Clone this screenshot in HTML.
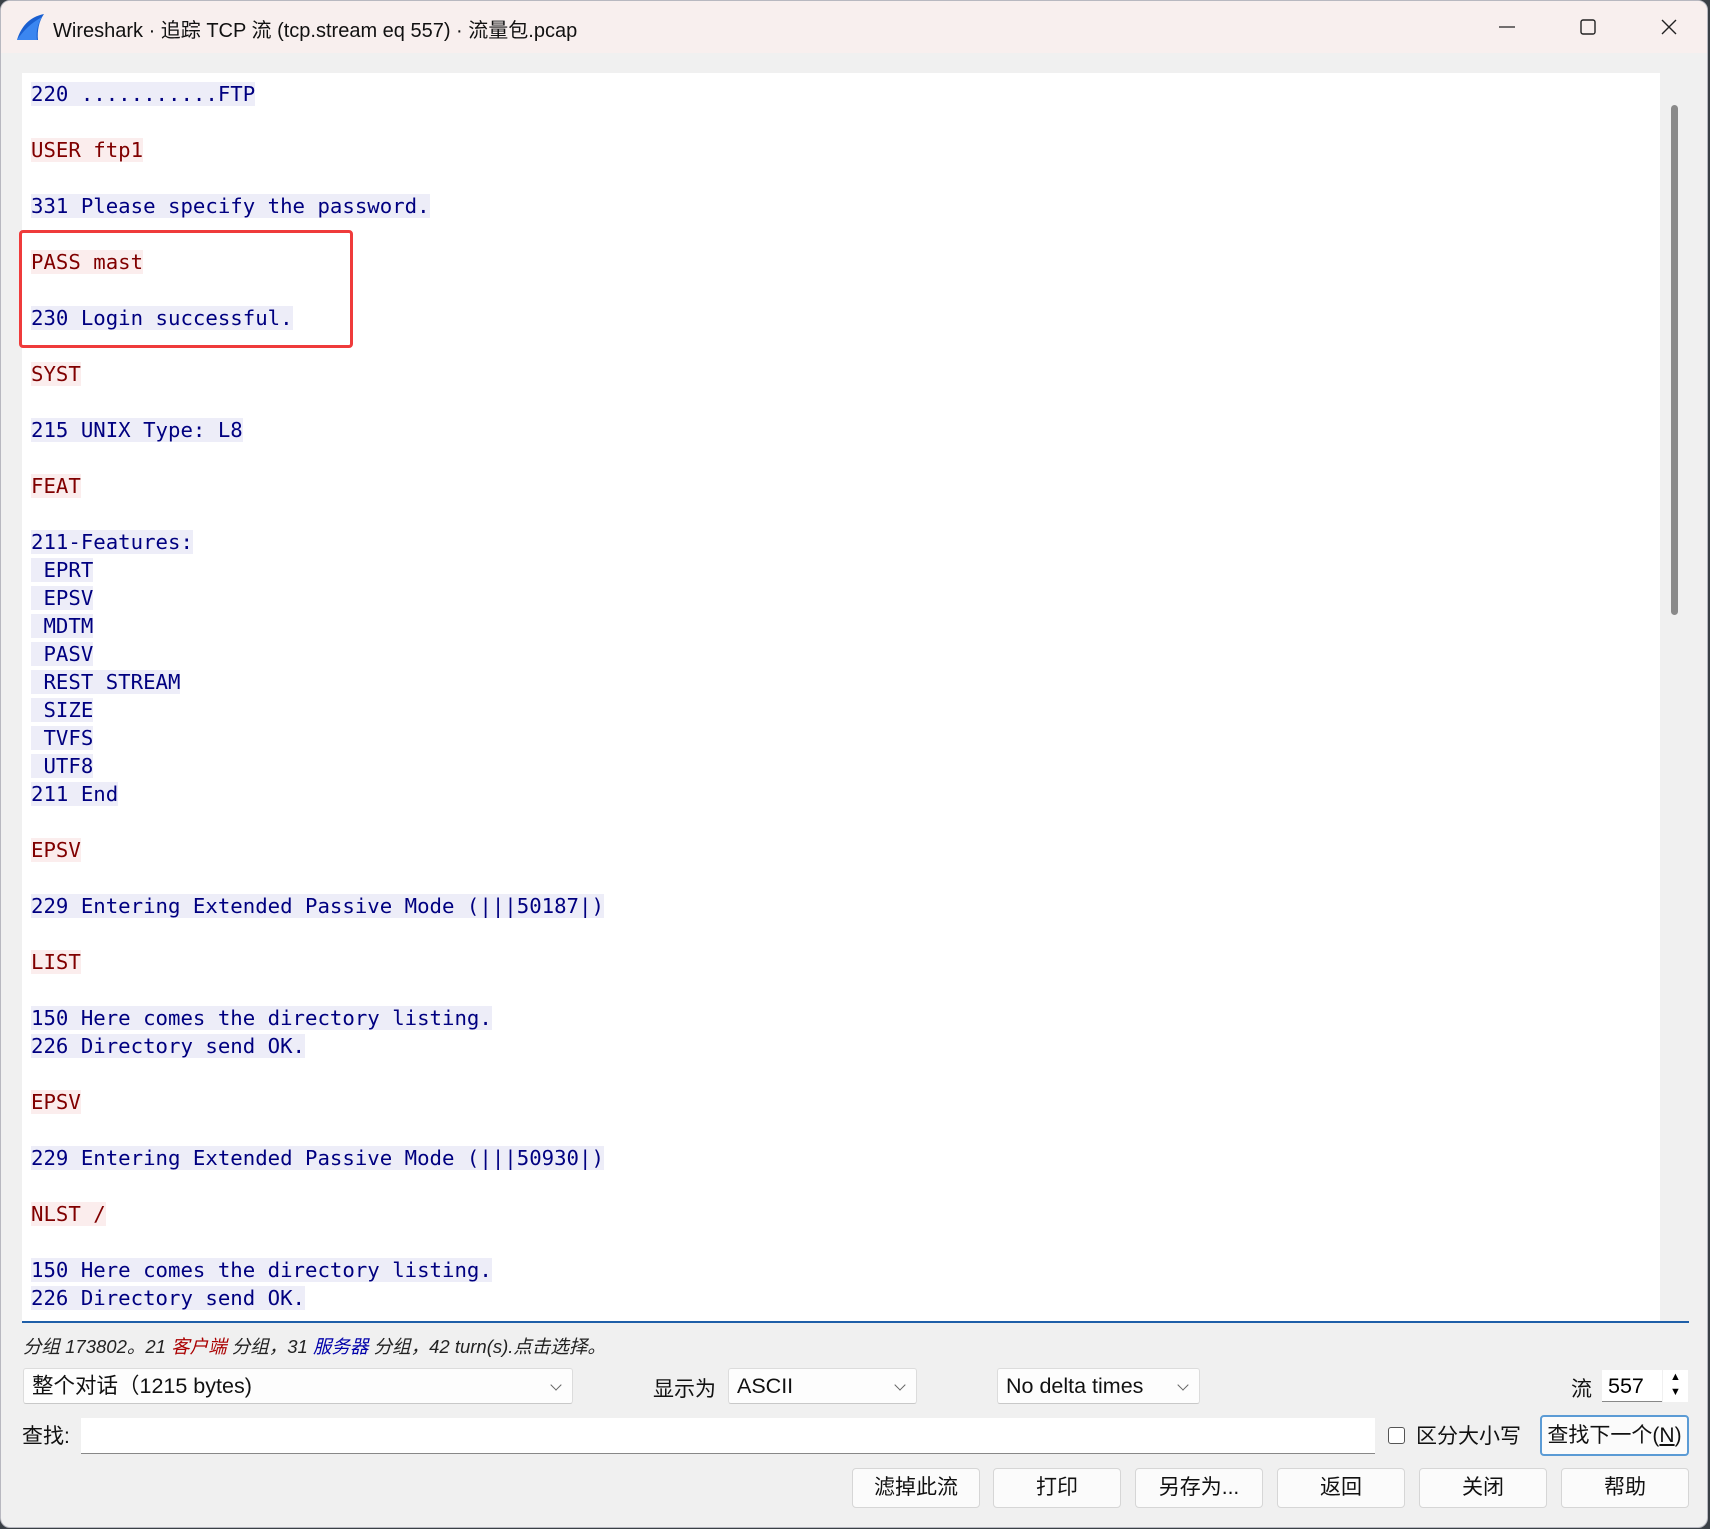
<!DOCTYPE html>
<html><head><meta charset="utf-8"><style>
*{box-sizing:border-box;margin:0;padding:0}
body{width:1710px;height:1529px;background:#3a4046;position:relative;overflow:hidden;font-family:"Liberation Sans","Noto Sans CJK SC",sans-serif;}
.win{position:absolute;left:0;top:0;width:1708px;height:1528px;background:#f0f0f0;border:1px solid #b8b8c0;border-radius:10px;overflow:hidden}
.title{position:absolute;left:0;top:0;right:0;height:52px;background:#f8efee}
.title .t{position:absolute;left:52px;top:13px;font-size:20px;color:#111;white-space:nowrap}
.ctl{position:absolute;top:16px;width:20px;height:20px}
.text{position:absolute;left:21px;top:72px;width:1667px;height:1250px;background:#fff;border-bottom:2px solid #1f5fa8;overflow:hidden}
.sb{position:absolute;right:0;top:0;width:29px;height:100%;background:#f0f0f0}
.thumb{position:absolute;left:11px;top:32px;width:7px;height:510px;background:#8a8a8a;border-radius:4px}
.lines{position:absolute;left:9px;top:7px;font-family:"DejaVu Sans Mono","Liberation Mono",monospace;font-size:20.7px;line-height:28px}
.l{height:28px;white-space:pre}
.b span{background:#ededf8;color:#000080}
.r span{background:#fbeded;color:#800000}
.box{position:absolute;left:18px;top:229px;width:334px;height:118px;border:3px solid #ef3b3b;border-radius:4px}
.ui{position:absolute;font-size:21px;color:#111;white-space:nowrap}
.combo{position:absolute;background:#fdfdfd;border:1px solid #dcdcdc;border-bottom-color:#c8c8c8;border-radius:3px;font-size:21.5px;padding-left:8px;line-height:34px;color:#111}
.combo:after{content:"";position:absolute;right:12px;top:12px;width:7px;height:7px;border-right:1px solid #666;border-bottom:1px solid #666;transform:rotate(45deg)}
.btn{position:absolute;top:1467px;width:128px;height:40px;background:#fbfbfb;border:1px solid #d6d6d6;border-radius:4px;font-size:21px;text-align:center;line-height:38px;color:#111}
</style></head><body>
<div class="win">
<div class="title">
<svg style="position:absolute;left:14px;top:12px" width="30" height="28" viewBox="0 0 30 28"><path d="M2 27 C6 14 14 4 29 1 C24 8 22 18 23 27 Z" fill="#1a5fd0"/><path d="M2 27 C8 18 16 10 27 4 C22 12 21 20 22 27Z" fill="#3b86f0"/></svg>
<div class="t">Wireshark · 追踪 TCP 流 (tcp.stream eq 557) · 流量包.pcap</div>
<svg class="ctl" style="left:1496px" viewBox="0 0 20 20"><path d="M2 10H18" stroke="#222" stroke-width="1.3"/></svg>
<svg class="ctl" style="left:1577px" viewBox="0 0 20 20"><rect x="3" y="3" width="14" height="14" rx="2" fill="none" stroke="#222" stroke-width="1.4"/></svg>
<svg class="ctl" style="left:1658px" viewBox="0 0 20 20"><path d="M3 3L17 17M17 3L3 17" stroke="#222" stroke-width="1.4"/></svg>
</div>
<div class="text">
<div class="lines"><div class="l b"><span>220 ...........FTP</span></div><div class="l"></div><div class="l r"><span>USER ftp1</span></div><div class="l"></div><div class="l b"><span>331 Please specify the password.</span></div><div class="l"></div><div class="l r"><span>PASS mast</span></div><div class="l"></div><div class="l b"><span>230 Login successful.</span></div><div class="l"></div><div class="l r"><span>SYST</span></div><div class="l"></div><div class="l b"><span>215 UNIX Type: L8</span></div><div class="l"></div><div class="l r"><span>FEAT</span></div><div class="l"></div><div class="l b"><span>211-Features:</span></div><div class="l b"><span> EPRT</span></div><div class="l b"><span> EPSV</span></div><div class="l b"><span> MDTM</span></div><div class="l b"><span> PASV</span></div><div class="l b"><span> REST STREAM</span></div><div class="l b"><span> SIZE</span></div><div class="l b"><span> TVFS</span></div><div class="l b"><span> UTF8</span></div><div class="l b"><span>211 End</span></div><div class="l"></div><div class="l r"><span>EPSV</span></div><div class="l"></div><div class="l b"><span>229 Entering Extended Passive Mode (|||50187|)</span></div><div class="l"></div><div class="l r"><span>LIST</span></div><div class="l"></div><div class="l b"><span>150 Here comes the directory listing.</span></div><div class="l b"><span>226 Directory send OK.</span></div><div class="l"></div><div class="l r"><span>EPSV</span></div><div class="l"></div><div class="l b"><span>229 Entering Extended Passive Mode (|||50930|)</span></div><div class="l"></div><div class="l r"><span>NLST /</span></div><div class="l"></div><div class="l b"><span>150 Here comes the directory listing.</span></div><div class="l b"><span>226 Directory send OK.</span></div></div>
<div class="sb"><div class="thumb"></div></div>
</div>
<div class="box"></div>
<div class="ui" style="left:22px;top:1332px;font-size:18.5px;font-style:italic;color:#222">分组 173802。21 <span style="color:#a00">客户端</span> 分组，31 <span style="color:#00a">服务器</span> 分组，42 turn(s).点击选择。</div>
<div class="combo" style="left:22px;top:1367px;width:550px;height:36px">整个对话（1215 bytes)</div>
<div class="ui" style="left:652px;top:1372px">显示为</div>
<div class="combo" style="left:727px;top:1367px;width:189px;height:36px">ASCII</div>
<div class="combo" style="left:996px;top:1367px;width:203px;height:36px">No delta times</div>
<div class="ui" style="left:1570px;top:1372px">流</div>
<div style="position:absolute;left:1601px;top:1369px;width:60px;height:32px;background:#fff;border-bottom:1px solid #888;font-size:21.5px;line-height:32px;padding-left:6px">557</div>
<div style="position:absolute;left:1662px;top:1369px;width:25px;height:32px;background:#fff;font-size:11px;line-height:15px;text-align:center">▲<br>▼</div>
<div class="ui" style="left:21px;top:1419px">查找:</div>
<div style="position:absolute;left:80px;top:1417px;width:1294px;height:36px;background:#fff;border-bottom:1px solid #888"></div>
<div style="position:absolute;left:1387px;top:1426px;width:17px;height:17px;border:1px solid #555;border-radius:3px;background:#fff"></div>
<div class="ui" style="left:1415px;top:1419px">区分大小写</div>
<div class="btn" style="left:1539px;top:1414px;width:149px;height:41px;border:2px solid #5b9bd5">查找下一个(<u>N</u>)</div>
<div class="btn" style="left:851px">滤掉此流</div>
<div class="btn" style="left:992px">打印</div>
<div class="btn" style="left:1134px">另存为...</div>
<div class="btn" style="left:1276px">返回</div>
<div class="btn" style="left:1418px">关闭</div>
<div class="btn" style="left:1560px">帮助</div>
</div>
</body></html>
